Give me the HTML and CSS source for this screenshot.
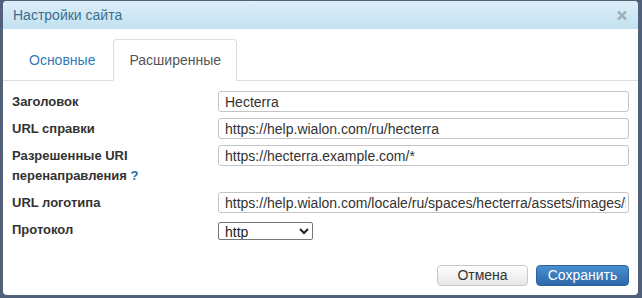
FILE: index.html
```html
<!DOCTYPE html>
<html lang="ru">
<head>
  <meta charset="UTF-8" />
  <meta name="viewport" content="width=device-width, initial-scale=1.0" />
  <title>Настройки сайта</title>
  <link rel="stylesheet" href="styles.css">
</head>
<body>
  <div class="dialog">
    <div class="dialog-header">
      <span class="dialog-title">Настройки сайта</span>
      <button class="close-btn" aria-label="Закрыть">
        <svg width="12" height="11" viewBox="0 0 12 11">
          <path d="M2 1.5 L10 9.5 M10 1.5 L2 9.5" stroke="#a3b1b9" stroke-width="2.6" stroke-linecap="butt" />
        </svg>
      </button>
    </div>

    <ul class="tabs">
      <li class="tab"><a href="#">Основные</a></li>
      <li class="tab active"><a href="#">Расширенные</a></li>
    </ul>

    <div class="form">
      <label class="field-label">Заголовок</label>
      <input class="field-input" type="text" value="Hecterra" />

      <label class="field-label">URL справки</label>
      <input class="field-input" type="text" value="https://help.wialon.com/ru/hecterra" />

      <label class="field-label">Разрешенные URI перенаправления <span class="hint">?</span></label>
      <input class="field-input" type="text" value="https://hecterra.example.com/*" />

      <label class="field-label">URL логотипа</label>
      <input class="field-input" type="text" value="https://help.wialon.com/locale/ru/spaces/hecterra/assets/images/logo.png" />

      <label class="field-label">Протокол</label>
      <div class="select-cell">
        <select class="field-select">
          <option>http</option>
          <option>https</option>
        </select>
      </div>
    </div>

    <div class="dialog-footer">
      <button class="btn btn-default">Отмена</button>
      <button class="btn btn-primary">Сохранить</button>
    </div>
  </div>
</body>
</html>
```

FILE: styles.css
```css
html, body {
  height: 100%;
}
body {
  margin: 0;
  padding: 1px 4px 3px 3px;
  box-sizing: border-box;
  background-color: #53607c;
  font-family: 'Liberation Sans', Arial, sans-serif;
  color: #333;
}
.dialog {
  height: 100%;
  display: flex;
  flex-direction: column;
  background-color: #ffffff;
  border-radius: 4px;
  overflow: hidden;
}
.dialog-header {
  height: 28px;
  flex: none;
  display: flex;
  align-items: center;
  justify-content: space-between;
  padding: 0 10px 0 10px;
  background: linear-gradient(to bottom, #ddeef8, #c2e1f1);
}
.dialog-title {
  font-size: 14px;
  color: #3c6e90;
}
.close-btn {
  border: none;
  background: none;
  padding: 0;
  display: flex;
  cursor: pointer;
}
.tabs {
  list-style: none;
  margin: 10px 0 0 0;
  padding: 0 0 0 10px;
  display: flex;
  border-bottom: 1px solid #dddddd;
}
.tab {
  margin-bottom: -1px;
  margin-right: 2px;
}
.tab a {
  display: block;
  padding: 10px 15px;
  font-size: 14px;
  line-height: 20px;
  color: #337ab7;
  text-decoration: none;
  border: 1px solid transparent;
  border-radius: 4px 4px 0 0;
}
.tab.active a {
  color: #555;
  background-color: #fff;
  border-color: #dddddd;
  border-bottom-color: transparent;
}
.form {
  display: grid;
  grid-template-columns: 206px 1fr;
  row-gap: 6px;
  padding: 10px 9px 0 9px;
  align-items: start;
}
.field-label {
  font-size: 13px;
  font-weight: bold;
  line-height: 20px;
  padding-top: 1px;
  color: #333;
}
.hint {
  color: #2a6ea6;
}
.field-input {
  height: 21px;
  box-sizing: border-box;
  border: 1px solid #c4c4c4;
  border-radius: 3px;
  padding: 0 2px 0 6px;
  font-family: 'Liberation Sans', Arial, sans-serif;
  font-size: 14px;
  color: #333;
  outline: none;
  min-width: 0;
}
.select-cell {
  display: flex;
  align-items: center;
  height: 21px;
  padding-top: 1px;
}
.field-select {
  width: 95px;
  height: 18px;
  box-sizing: border-box;
  border: 1px solid #767676;
  border-radius: 2px;
  background-color: #fff;
  font-family: 'Liberation Sans', Arial, sans-serif;
  font-size: 14px;
  color: #222;
  padding: 0 2px;
}
.dialog-footer {
  margin-top: auto;
  display: flex;
  justify-content: flex-end;
  gap: 8px;
  padding: 0 9px 9px 0;
}
.btn {
  height: 21px;
  box-sizing: border-box;
  border-radius: 4px;
  font-family: 'Liberation Sans', Arial, sans-serif;
  font-size: 14px;
  line-height: 19px;
  padding: 0 10px;
  cursor: pointer;
}
.btn-default {
  width: 91px;
  color: #333;
  background: linear-gradient(to bottom, #ffffff, #e6e6e6);
  border: 1px solid #c8c8c8;
}
.btn-primary {
  width: 93px;
  color: #ffffff;
  background: linear-gradient(to bottom, #4a8fce, #2c68aa);
  border: 1px solid #2b63a2;
}
```
